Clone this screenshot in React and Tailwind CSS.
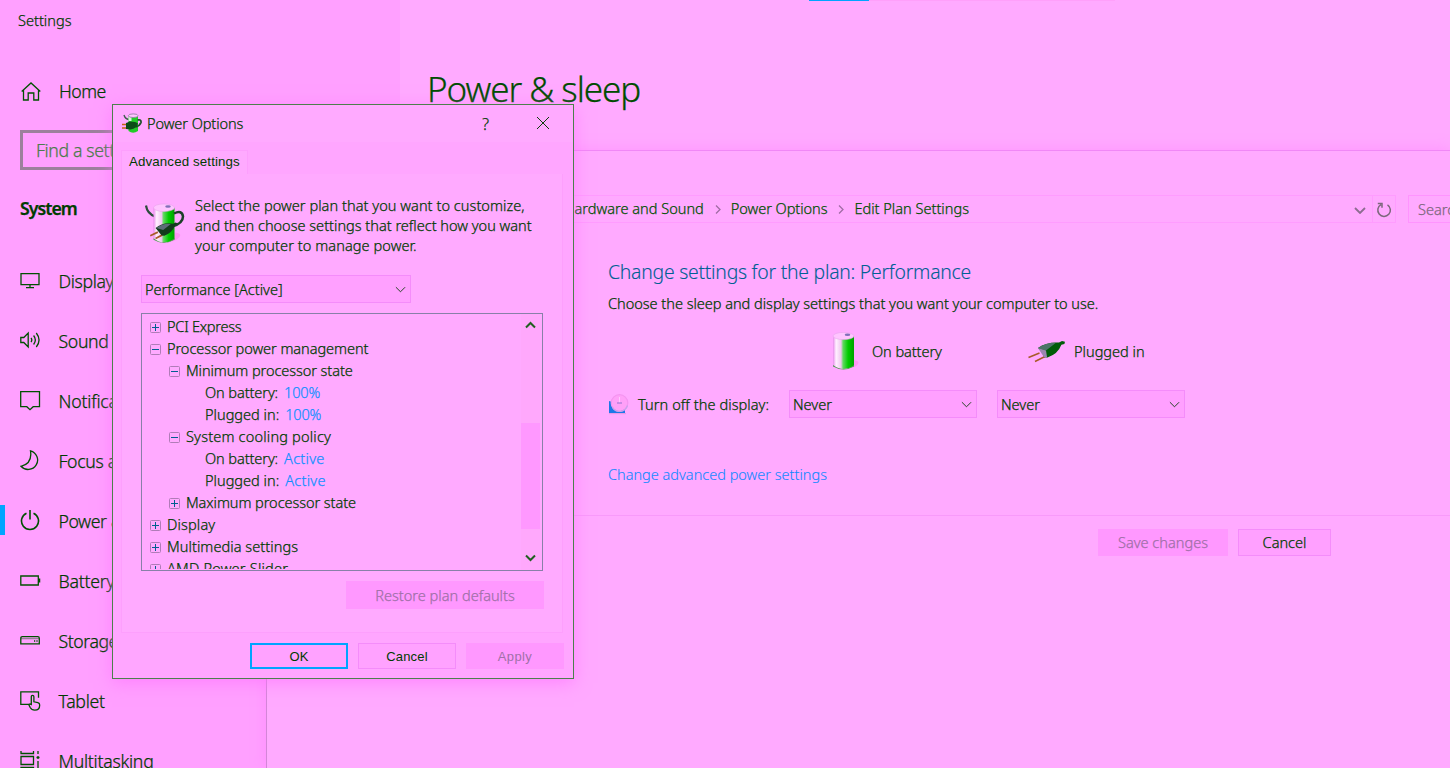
import React from 'react';

const NAV = [
  ['Display', 'display', 'tracking-[-0.35px]'],
  ['Sound', 'sound', 'tracking-[-0.35px]'],
  ['Notifications & actions', 'notify', 'tracking-[-0.2px]'],
  ['Focus assist', 'focus', 'tracking-[-0.35px]'],
  ['Power & sleep', 'power', 'tracking-[-0.45px]'],
  ['Battery', 'battery', 'tracking-[-0.25px]'],
  ['Storage', 'storage', 'tracking-[-0.45px]'],
  ['Tablet', 'tablet', 'tracking-[-0.3px]'],
  ['Multitasking', 'multi', 'tracking-[-0.25px]'],
];

const ICONS = {
  home: <path d="M1.7 10.5 11 2l9.3 8.5M3.5 9v10h4.7v-7h5.6v7h4.7V9" />,
  display: <path d="M1 3.7h18v11H1zM10 15v2.5M6 17.6h8" />,
  sound: <path d="M.8 7.500h3L8.2 3v14l-4.4-4.500h-3zM11 8q1.600 2 0 4M13.600 5.500q3.500 4.500 0 9M16.300 3q5.500 7 0 14" />,
  notify: <path d="M.7 1.700h18.800v15h-6.300l-3.200 3-3.200-3H.7z" />,
  focus: <path d="M10.500.8A9.500 9.500 0 1 1 1 16.300Q12.500 13.500 10.500.8z" />,
  power: <path d="M6.500 3.200a8.500 8.500 0 1 0 7 0M10 0v9.500" strokeWidth="1.600" />,
  battery: <path d="M.8 6h17.500v9H.8zM19.600 8.500v4" />,
  storage: (
    <>
      <path d="M.8 8.200q0-1.500 1.500-1.500h15.500q1.500 0 1.500 1.500v5.600H.8zM14 11h1.200M16.400 11h1.200" />
      <path d="M1 8.700h18" strokeWidth=".5" />
    </>
  ),
  tablet: (
    <path d="M9 14.300H.8V1.800h17.700v6M11.300 14.500V6.800q0-1.500 1.300-1.500t1.300 1.500v5l4 .8q1.800.5 1.800 2.400 0 5.200-5 5.200-3 0-4.500-2.700l-1.200-2.500q0-1.700 2.300-.5z" />
  ),
  multi: <path d="M1 1v2.500h12.500V1M1 6.500h12.500v8H1zM1 20v-2.500h12.500V20M18 1v3M18 11v9M16.500 7.500h3M18 6v3" />,
};

function NavIcon({ name }) {
  return (
    <svg className="h-[21px] w-[21px] shrink-0 fill-none stroke-[#005000]" viewBox="0 0 21 21" strokeWidth="1.300">
      {ICONS[name]}
    </svg>
  );
}

function Chevron({ className, d = 'M1 1l5 5 5-5', box = '0 0 12 7' }) {
  return (
    <svg className={`shrink-0 fill-none ${className}`} viewBox={box}>
      <path d={d} />
    </svg>
  );
}

function BatteryBody() {
  return (
    <>
      <defs>
        <linearGradient id="cell">
          <stop offset="0" stopColor="#e88cec" />
          <stop offset=".15" stopColor="#fff0ff" />
          <stop offset=".38" stopColor="#f0c8f0" />
          <stop offset=".48" stopColor="#60d860" />
          <stop offset=".72" stopColor="#00cc00" />
          <stop offset="1" stopColor="#00a000" />
        </linearGradient>
      </defs>
      <path d="M0 4v30q10.500 6 21 0V4z" fill="url(#cell)" />
      <path d="M0 33q10.500 8 21 0v1.500q-10.500 6-21 0z" fill="#4c9a4c" />
      <ellipse cx="10.500" cy="4" rx="10.500" ry="3.600" fill="#ffc4ff" stroke="#e8a4ec" strokeWidth=".6" />
      <ellipse cx="14.500" cy="2.800" rx="2.800" ry="1.200" fill="#8070b8" />
    </>
  );
}

function BatteryIcon() {
  return (
    <svg className="h-[40px] w-[28px] shrink-0" viewBox="-1 0 28 40">
      <path d="M21 28q6 1 4 4t-7 4z" fill="#ff94f4" />
      <BatteryBody />
    </svg>
  );
}

function PlugIcon() {
  return (
    <svg className="h-[22px] w-[38px] shrink-0" viewBox="0 0 38 22">
      <path d="M.5 16.500l11-4.500M7 20.500l10-5" stroke="#a85a28" strokeWidth="1.500" fill="none" />
      <path d="M10 7Q18 1 31 1.500l3-1.500 3 .8-.6 2.200-3 .8Q30 13 19.500 16.500l-3.500-.3-1-4z" fill="#005c08" />
      <path d="M10 7Q18 1.500 28 1.800L18 9.500z" fill="#4c7468" />
      <path d="M10 7l6 9.200 3-.3-1-6.400z" fill="#9c86b0" />
    </svg>
  );
}

function PlanIcon({ className }) {
  return (
    <svg className={`shrink-0 ${className}`} viewBox="0 0 40 42">
      <path d="M30 30q8 1 4 5t-8 4z" fill="#ff94f4" />
      <path d="M1 3q1 8 9 11" fill="none" stroke="#2c4c3c" strokeWidth="2.200" />
      <g transform="translate(8.500 1) scale(1 1.050)">
        <BatteryBody />
      </g>
      <path d="M29 11q8-4 9 3 0 7-11 10" fill="none" stroke="#1c4028" strokeWidth="2.500" />
      <g transform="translate(4.500 20) scale(.76 .8)">
        <path d="M1 16.500l10-4.500M8 20l9-4.500" stroke="#a85a28" strokeWidth="2.200" fill="none" />
        <path d="M8 7Q18-1 31 1.500l3-1.500 3 .8-3.600 3Q30 13 19.500 16.500l-3.500-.3z" fill="#123c1c" />
        <path d="M9 7Q18 .5 28 1.800L18 9.500z" fill="#5c6c78" />
      </g>
    </svg>
  );
}

function TitleIcon() {
  return (
    <svg className="h-[21px] w-[21px] shrink-0" viewBox="0 0 21 21">
      <path d="M2 2q1 4 5 4.500" fill="none" stroke="#3c5c4c" strokeWidth="1.300" />
      <path d="M6.500 3v15q4.500 3.500 9.500 0V3z" fill="#22cc28" />
      <path d="M6.500 3v5h3V3z" fill="#d8f0d8" />
      <ellipse cx="11.200" cy="2.700" rx="4.800" ry="1.800" fill="#ffc4ff" stroke="#887898" strokeWidth=".8" />
      <path d="M15.500 7q4-1 3.500 2.500-1 3-5 4.500" fill="none" stroke="#1c5028" strokeWidth="1.800" />
      <path d="M0 11.500h5M0 15h5" stroke="#c86414" strokeWidth="1.300" />
      <path d="M4 10l4-1.500q6 0 8 2-1 5-7.500 6L4 16z" fill="#0c4c18" />
    </svg>
  );
}

function DisplayOffIcon() {
  return (
    <svg className="h-[21px] w-[21px] shrink-0" viewBox="0 0 21 21">
      <path d="M1 7l16 5v7H1z" fill="#1c78e8" />
      <path d="M1 19.600h17" stroke="#e898e8" strokeWidth="1.200" />
      <circle cx="11.500" cy="9" r="8.300" fill="#ffa0f8" stroke="#f494f0" strokeWidth="1.200" />
      <path d="M4.500 13.500a8.300 8.300 0 0 0 15-2" fill="none" stroke="#c8a0ec" strokeWidth="1.300" />
      <path d="M11.500 3v6" stroke="#ffc8ff" strokeWidth="1" />
      <path d="M9 9h5" stroke="#a478d8" strokeWidth="1.200" />
    </svg>
  );
}

function Combo({ children, className }) {
  return (
    <div className={`flex h-[28px] items-center justify-between border border-[#f48cfa] bg-[#ffa0ff] pr-[4px] pl-[3px] ${className}`}>
      <span className="pt-[2px]">{children}</span>
      <Chevron className="h-[7px] w-[11px] stroke-[#104010]" />
    </div>
  );
}

const TREE = [
  [0, '+', 'PCI Express', null, 'tracking-[-0.25px]'],
  [0, '-', 'Processor power management', null, 'tracking-[-0.07px]'],
  [1, '-', 'Minimum processor state', null, 'tracking-[-0.08px]'],
  [2, '', 'On battery:', '100%', 'tracking-[-0.1px]'],
  [2, '', 'Plugged in:', '100%', 'tracking-[0px]'],
  [1, '-', 'System cooling policy', null, 'tracking-[0.18px]'],
  [2, '', 'On battery:', 'Active', 'tracking-[-0.1px]'],
  [2, '', 'Plugged in:', 'Active', 'tracking-[0px]'],
  [1, '+', 'Maximum processor state', null, 'tracking-[-0.07px]'],
  [0, '+', 'Display', null, 'tracking-[0.15px]'],
  [0, '+', 'Multimedia settings', null, 'tracking-[0.05px]'],
  [0, '+', 'AMD Power Slider', null, 'tracking-[0.2px]'],
];

const INDENT = ['pl-[8px]', 'pl-[27px]', 'pl-[63px]'];

function TreeRow({ level, sign, label, value, track }) {
  return (
    <div className={`flex h-[22px] items-center ${INDENT[level]}`}>
      {sign && (
        <svg className="mr-[6px] h-[11px] w-[11px] shrink-0" viewBox="0 0 11 11" fill="none">
          <rect x=".5" y=".5" width="10" height="10" rx="1" stroke="#b07cb8" />
          <path d={sign === '+' ? 'M2 5.500h7M5.500 2v7' : 'M2 5.500h7'} stroke="#006090" />
        </svg>
      )}
      <span className={track}>{label}</span>
      {value && (
        <span className={`ml-[6px] text-[#1090ff] ${value === '100%' ? 'tracking-[-0.2px]' : 'tracking-[0.25px]'}`}>{value}</span>
      )}
    </div>
  );
}

function SettingsWindow() {
  return (
    <div className="flex h-full w-full">
      <aside className="flex h-full w-[400px] shrink-0 flex-col overflow-hidden bg-[#ffa0ff] text-[17.700px]">
        <div className="mt-[10px] ml-[18px] h-[21px] shrink-0 text-[14.550px] leading-[21px]">Settings</div>
        <div className="mt-[40px] ml-[20px] flex h-[40px] shrink-0 items-center gap-[18px]">
          <NavIcon name="home" />
          <span className="pt-px tracking-[-0.5px]">Home</span>
        </div>
        <div className="mt-[19px] ml-[20px] flex h-[40px] w-[360px] shrink-0 items-center border-3 border-[#9c809c] pt-px pl-[13px] tracking-[-0.380px] text-[#4c7c4c]">
          Find a setting
        </div>
        <div className="mt-[23px] ml-[20px] h-[30px] shrink-0 leading-[30px] font-semibold tracking-[-0.980px]">System</div>
        <nav className="mt-[27px] flex shrink-0 flex-col">
          {NAV.map(([label, icon, track]) => (
            <div key={label} className="flex h-[60px] shrink-0 items-center">
              <div className={`h-[30px] w-[5px] ${icon === 'power' ? 'bg-[#00a4ff]' : ''}`} />
              <div className="ml-[15px] flex items-center gap-[17.500px] pt-[2px]">
                <NavIcon name={icon} />
                <span className={track}>{label}</span>
              </div>
            </div>
          ))}
        </nav>
      </aside>
      <main className="flex-1 bg-[#ffaaff]">
        <div className="flex h-px pl-[409px]">
          <div className="w-[60px] bg-[#00a4ff]" />
          <div className="w-[246px] bg-[#ffa0fa]" />
        </div>
        <h1 className="mt-[63px] ml-[27px] h-[50px] text-[35px] leading-[50px] tracking-[-1.050px] text-[#004c00]">Power &amp; sleep</h1>
      </main>
    </div>
  );
}

function ControlPanelWindow() {
  return (
    <div className="absolute top-[150px] left-[266px] flex h-[618px] w-[1184px] flex-col overflow-hidden border-t border-l border-t-[#f088f6] border-l-[#d486d8] bg-[#ffaaff] shadow-[0_0_14px_rgba(255,120,255,0.45)]">
      <div className="mt-[44px] flex h-[28px] shrink-0">
        <div className="ml-[20px] flex w-[1109px] shrink-0 border border-[#ff9cff] text-[#005000]">
          <div className="flex w-[1085px] items-center border-r border-[#ff9cff] pr-[6px]">
            <span className="ml-[276px] whitespace-nowrap">Hardware and Sound</span>
            <Chevron className="ml-[11px] h-[9px] w-[6px] stroke-[#a06ca4] stroke-[1.300]" d="M1 .500l4 4-4 4" box="0 0 6 9" />
            <span className="ml-[10px] tracking-[-0.060px]">Power Options</span>
            <Chevron className="ml-[11px] h-[9px] w-[6px] stroke-[#a06ca4] stroke-[1.300]" d="M1 .500l4 4-4 4" box="0 0 6 9" />
            <span className="ml-[10px]">Edit Plan Settings</span>
            <Chevron className="mt-[3px] ml-auto h-[7px] w-[12px] stroke-[#8c6c90] stroke-[1.800]" />
          </div>
          <div className="flex flex-1 items-center justify-center">
            <svg className="mt-px h-[16px] w-[16px] fill-none stroke-[#7c687c] stroke-[1.500]" viewBox="0 0 16 16">
              <path d="M11.500 2.800A6.300 6.300 0 1 1 5 2.600M1.800 1.500h4.200v4.300" />
            </svg>
          </div>
        </div>
        <div className="ml-[12px] flex w-[200px] shrink-0 items-center border border-[#ff94ff] pt-px pl-[9px] text-[#806880]">Search Control Panel</div>
      </div>
      <div className="ml-[341px] flex flex-col">
        <h2 className="mt-[34px] h-[30px] text-[19.400px] leading-[30px] tracking-[-0.260px] whitespace-nowrap text-[#006094] [-webkit-text-stroke:0.1px]">
          Change settings for the plan: Performance
        </h2>
        <p className="mt-[6px] h-[20px] leading-[20px] tracking-[-0.030px]">
          Choose the sleep and display settings that you want your computer to use.
        </p>
        <div className="mt-[18px] flex h-[42px] items-center">
          <div className="ml-[224px] flex w-[196px] items-center gap-[12px]">
            <BatteryIcon />
            <span className="tracking-[-0.080px]">On battery</span>
          </div>
          <div className="flex items-center gap-[8px]">
            <PlugIcon />
            <span>Plugged in</span>
          </div>
        </div>
        <div className="mt-[17px] flex h-[28px] items-center">
          <DisplayOffIcon />
          <span className="ml-[9px] w-[151px] pt-[2px] tracking-[0.060px]">Turn off the display:</span>
          <Combo className="w-[188px]">Never</Combo>
          <Combo className="ml-[20px] w-[188px]">Never</Combo>
        </div>
        <a className="mt-[45px] h-[22px] leading-[22px] tracking-[-0.020px] text-[#1088ff] [-webkit-text-stroke:0.1px]">Change advanced power settings</a>
      </div>
      <div className="mt-[30px] flex h-[60px] shrink-0 gap-[10px] border-t border-[#f89afa] pt-[13px] pl-[831px]">
        <div className="flex h-[27px] w-[130px] items-center justify-center bg-[#ff98ff] text-[#a070a8]">Save changes</div>
        <div className="flex h-[27px] w-[93px] items-center justify-center border border-[#f48cfa] bg-[#ffa0ff]">Cancel</div>
      </div>
    </div>
  );
}

function PowerOptionsDialog() {
  return (
    <div className="absolute top-[104px] left-[112px] flex h-[575px] w-[462px] flex-col border border-[#4c804c] bg-[#ffa6ff] shadow-[0_4px_16px_rgba(255,110,255,0.6)]">
      <div className="flex h-[37px] shrink-0 items-center bg-[#ffaaff] pl-[9px]">
        <TitleIcon />
        <span className="ml-[4px] tracking-[-0.080px]">Power Options</span>
        <span className="mr-px ml-auto text-[16px]">?</span>
        <svg className="mr-[23px] mb-px ml-[46px] h-[14px] w-[14px] fill-none stroke-[#0c400c]" viewBox="0 0 14 14">
          <path d="M1 1l12 12M13 1L1 13" />
        </svg>
      </div>
      <div className="mt-[8px] ml-[8px] flex h-[24px] w-[127px] shrink-0 items-center border border-b-0 border-[#fd9ffd] bg-[#ffaaff] pb-[2px] pl-[7px] font-['Liberation_Sans',sans-serif] text-[13.300px] font-normal tracking-[0.130px] whitespace-nowrap [-webkit-text-stroke:0px]">
        Advanced settings
      </div>
      <div className="ml-[8px] flex h-[459px] w-[442px] shrink-0 flex-col border border-t-0 border-[#fd9ffd] bg-[#ffaaff] pl-[19px]">
        <div className="flex h-[82px] shrink-0 pt-[21px]">
          <PlanIcon className="mt-[7px] ml-[4px] h-[43px] w-[40px]" />
          <div className="ml-[10px] leading-[20px] whitespace-nowrap">
            <div className="tracking-[0.040px]">Select the power plan that you want to customize,</div>
            <div className="tracking-[-0.010px]">and then choose settings that reflect how you want</div>
            <div className="tracking-[0.060px]">your computer to manage power.</div>
          </div>
        </div>
        <Combo className="mt-[19px] w-[270px] shrink-0">Performance [Active]</Combo>
        <div className="mt-[10px] flex h-[258px] w-[402px] shrink-0 border border-[#8880a8]">
          <div className="flex-1 overflow-hidden pt-[2px] pb-[2px]">
            <div className="h-[253px] overflow-hidden">
              {TREE.map(([level, sign, label, value, track], i) => (
                <TreeRow key={i} level={level} sign={sign} label={label} value={value} track={track} />
              ))}
            </div>
          </div>
          <div className="mr-[2px] flex w-[19px] flex-col items-center bg-[#ffa8fc]">
            <Chevron className="mt-[7px] h-[8px] w-[11px] stroke-[#206020] stroke-2" d="M1 6.500l4.500-4.500L10 6.500" box="0 0 11 8" />
            <div className="mt-[94px] h-[106px] w-[19px] bg-[#ff98ff]" />
            <Chevron className="mt-[25px] h-[8px] w-[11px] stroke-[#206020] stroke-2" d="M1 1.500L5.500 6 10 1.500" box="0 0 11 8" />
          </div>
        </div>
        <div className="mt-[10px] ml-[205px] flex h-[28px] w-[198px] shrink-0 items-center justify-center bg-[#ff98ff] pt-px text-[#a070a8]">
          Restore plan defaults
        </div>
      </div>
      <div className="mt-[10px] ml-[137px] flex h-[26px] shrink-0 gap-[10px] font-['Liberation_Sans',sans-serif] text-[13px] font-normal [-webkit-text-stroke:0px]">
        <div className="flex w-[98px] items-center justify-center border-2 border-[#00a4ff] bg-[#ffa2ff] pt-px">OK</div>
        <div className="flex w-[98px] items-center justify-center border border-[#f48cfa] bg-[#ffa2ff] pt-px tracking-[0.200px]">Cancel</div>
        <div className="flex w-[98px] items-center justify-center bg-[#ff98ff] pt-[2px] tracking-[0.400px] text-[#a070a8]">Apply</div>
      </div>
    </div>
  );
}

export default function App() {
  return (
    <div className="relative h-[768px] w-[1450px] overflow-hidden bg-[#ffaaff] font-['Noto_Sans','Open_Sans',sans-serif] text-[14.550px] font-light text-[#003c00] [-webkit-text-stroke:0.250px]">
      <SettingsWindow />
      <ControlPanelWindow />
      <PowerOptionsDialog />
    </div>
  );
}
